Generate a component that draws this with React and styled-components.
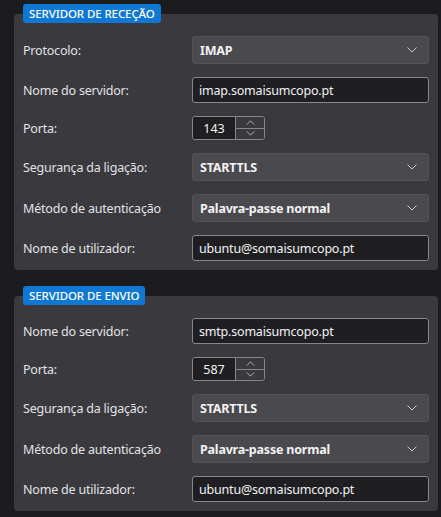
import React from 'react';
import styled, { createGlobalStyle } from 'styled-components';

const GlobalStyle = createGlobalStyle`
    html, body {
        margin: 0;
        padding: 0;
        background: #1c1c1f;
    }
    body {
        font-family: 'Noto Sans', 'DejaVu Sans', sans-serif;
        color: #e4e4e6;
    }
`;

const Page = styled.div`
    display: flex;
    flex-direction: column;
    gap: 26px;
    padding: 14px 3px 0 14px;
    width: 441px;
    box-sizing: border-box;
`;

const Panel = styled.section`
    position: relative;
    background: #3a393e;
    border-radius: 4px;
    padding: 22px 9px 9px 9px;
`;

const Badge = styled.div`
    position: absolute;
    top: -10px;
    left: 9px;
    height: 19px;
    line-height: 19px;
    padding: 0 6px;
    background: #0f78d4;
    color: #fff;
    border-radius: 3px;
    font-size: 11.5px;
    font-weight: 500;
    letter-spacing: -0.1px;
`;

const Form = styled.div`
    display: grid;
    grid-template-columns: 169px 1fr;
    row-gap: 13px;
    align-items: center;
`;

const Label = styled.label`
    font-size: 12.5px;
    color: #e2e2e4;
    letter-spacing: -0.2px;
`;

const Select = styled.div`
    height: 28px;
    box-sizing: border-box;
    display: flex;
    align-items: center;
    justify-content: space-between;
    padding: 0 11px 0 7px;
    background: #4a494e;
    border: 1px solid #545358;
    border-radius: 3px;
    font-size: 12.5px;
    font-weight: 700;
    color: #f2f2f2;
    letter-spacing: -0.2px;
`;

const TextInput = styled.input`
    height: 26px;
    box-sizing: border-box;
    width: 100%;
    padding: 0 6px;
    background: #1f1f22;
    border: 1px solid #87868b;
    border-radius: 3px;
    font-family: inherit;
    font-size: 12.5px;
    color: #f2f2f2;
    letter-spacing: -0.2px;
    outline: none;
`;

const Spinner = styled.div`
    display: flex;
    width: 73px;
    height: 24px;
    box-sizing: border-box;
    border: 1px solid #87868b;
    border-radius: 3px;
    overflow: hidden;
`;

const SpinValue = styled.div`
    flex: 1;
    display: flex;
    align-items: center;
    justify-content: center;
    background: #1f1f22;
    font-size: 12.5px;
    color: #f2f2f2;
`;

const SpinButtons = styled.div`
    width: 28px;
    display: flex;
    flex-direction: column;
    border-left: 1px solid #87868b;
    background: #3a393e;
`;

const SpinButton = styled.div`
    flex: 1;
    display: flex;
    align-items: center;
    justify-content: center;
    border-top: ${(p) => (p.$down ? '1px solid #87868b' : 'none')};
`;

const Chevron = ({ up, w = 10, h = 6 }) => (
    <svg width={w} height={h} viewBox="0 0 10 6" fill="none">
        <polyline
            points={up ? '0.5,5.5 5,1 9.5,5.5' : '0.5,0.5 5,5 9.5,0.5'}
            stroke="#c9c9cc"
            strokeWidth="1"
        />
    </svg>
);

const Dropdown = ({ value }) => (
    <Select>
        <span>{value}</span>
        <Chevron />
    </Select>
);

const PortField = ({ value }) => (
    <Spinner>
        <SpinValue>{value}</SpinValue>
        <SpinButtons>
            <SpinButton><Chevron up w={9} h={5} /></SpinButton>
            <SpinButton $down><Chevron w={9} h={5} /></SpinButton>
        </SpinButtons>
    </Spinner>
);

const App = () => (
    <>
        <GlobalStyle />
        <Page>
            <Panel>
                <Badge>SERVIDOR DE RECEÇÃO</Badge>
                <Form>
                    <Label>Protocolo:</Label>
                    <Dropdown value="IMAP" />
                    <Label>Nome do servidor:</Label>
                    <TextInput defaultValue="imap.somaisumcopo.pt" />
                    <Label>Porta:</Label>
                    <PortField value="143" />
                    <Label>Segurança da ligação:</Label>
                    <Dropdown value="STARTTLS" />
                    <Label>Método de autenticação</Label>
                    <Dropdown value="Palavra-passe normal" />
                    <Label>Nome de utilizador:</Label>
                    <TextInput defaultValue="ubuntu@somaisumcopo.pt" />
                </Form>
            </Panel>
            <Panel>
                <Badge>SERVIDOR DE ENVIO</Badge>
                <Form>
                    <Label>Nome do servidor:</Label>
                    <TextInput defaultValue="smtp.somaisumcopo.pt" />
                    <Label>Porta:</Label>
                    <PortField value="587" />
                    <Label>Segurança da ligação:</Label>
                    <Dropdown value="STARTTLS" />
                    <Label>Método de autenticação</Label>
                    <Dropdown value="Palavra-passe normal" />
                    <Label>Nome de utilizador:</Label>
                    <TextInput defaultValue="ubuntu@somaisumcopo.pt" />
                </Form>
            </Panel>
        </Page>
    </>
);

export default App;
